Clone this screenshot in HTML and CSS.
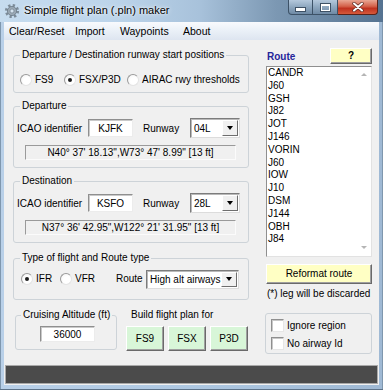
FILE: index.html
```html
<!DOCTYPE html>
<html>
<head>
<meta charset="utf-8">
<title>Simple flight plan (.pln) maker</title>
<link rel="stylesheet" href="styles.css">
</head>
<body>
<div class="window">
  <div class="titlebar">
    <svg class="app-icon" width="16" height="16" viewBox="0 0 16 16">
      <circle cx="8" cy="8" r="5.6" fill="none" stroke="#7d8c99" stroke-width="3" stroke-dasharray="2.2 2.2"/>
      <circle cx="8" cy="8" r="4.6" fill="#9aa8b4" stroke="#6c7b88" stroke-width="0.8"/>
      <circle cx="8" cy="8" r="2" fill="#d4e2ee" stroke="#6c7b88" stroke-width="0.6"/>
    </svg>
    <span class="title">Simple flight plan (.pln) maker</span>
    <div class="caption">
      <span class="cbtn cmin"><i class="glyph-min"></i></span>
      <span class="cbtn cmax"><i class="glyph-max"></i></span>
      <span class="cbtn cclose">
        <svg width="12" height="10" viewBox="0 0 12 10"><path d="M2 1.5 L10 8.5 M10 1.5 L2 8.5" stroke="#5a2a22" stroke-width="3.4" stroke-linecap="round"/><path d="M2 1.5 L10 8.5 M10 1.5 L2 8.5" stroke="#fff" stroke-width="2" stroke-linecap="round"/></svg>
      </span>
    </div>
  </div>
  <div class="menubar">
    <span class="menu m1">Clear/Reset</span>
    <span class="menu m2">Import</span>
    <span class="menu m3">Waypoints</span>
    <span class="menu m4">About</span>
  </div>
  <div class="client">
    <div class="main">
      <div class="left">
        <div class="group g-pos">
          <span class="group-title">Departure / Destination runway start positions</span>
          <label class="opt o-fs9"><span class="radio"></span>FS9</label>
          <label class="opt o-fsx"><span class="radio checked"></span>FSX/P3D</label>
          <label class="opt o-airac"><span class="radio"></span>AIRAC rwy thresholds</label>
        </div>

        <div class="group g-apt">
          <span class="group-title">Departure</span>
          <div class="apt-row">
            <span class="lbl-icao">ICAO identifier</span>
            <span class="tb tb-icao">KJFK</span>
            <span class="lbl-rwy">Runway</span>
            <span class="combo combo-rwy"><span class="combo-text">04L</span><span class="combo-btn"><i class="arrow"></i></span></span>
          </div>
          <div class="coords">N40° 37' 18.13",W73° 47' 8.99" [13 ft]</div>
        </div>

        <div class="group g-apt g-dest">
          <span class="group-title">Destination</span>
          <div class="apt-row">
            <span class="lbl-icao">ICAO identifier</span>
            <span class="tb tb-icao">KSFO</span>
            <span class="lbl-rwy">Runway</span>
            <span class="combo combo-rwy"><span class="combo-text">28L</span><span class="combo-btn"><i class="arrow"></i></span></span>
          </div>
          <div class="coords">N37° 36' 42.95",W122° 21' 31.95" [13 ft]</div>
        </div>

        <div class="group g-type">
          <span class="group-title">Type of flight and Route type</span>
          <label class="opt o-ifr"><span class="radio checked"></span>IFR</label>
          <label class="opt o-vfr"><span class="radio"></span>VFR</label>
          <span class="lbl-route">Route</span>
          <span class="combo combo-route"><span class="combo-text">High alt airways</span><span class="combo-btn"><i class="arrow"></i></span></span>
        </div>

        <div class="bottom-row">
          <div class="group g-alt">
            <span class="group-title">Cruising Altitude (ft)</span>
            <span class="tb tb-alt">36000</span>
          </div>
          <div class="build">
            <div class="build-lbl">Build flight plan for</div>
            <div class="build-btns">
              <span class="btn btn-green">FS9</span>
              <span class="btn btn-green">FSX</span>
              <span class="btn btn-green">P3D</span>
            </div>
          </div>
        </div>
      </div>

      <div class="right">
        <div class="route-head">
          <span class="route-lbl">Route</span>
          <span class="btn btn-yellow btn-help">?</span>
        </div>
        <div class="listbox">
          <div class="items">
            <div>CANDR</div>
            <div>J60</div>
            <div>GSH</div>
            <div>J82</div>
            <div>JOT</div>
            <div>J146</div>
            <div>VORIN</div>
            <div>J60</div>
            <div>IOW</div>
            <div>J10</div>
            <div>DSM</div>
            <div>J144</div>
            <div>OBH</div>
            <div>J84</div>
          </div>
          <div class="vscroll"><i class="sarrow up"></i><i class="sarrow down"></i></div>
        </div>
        <span class="btn btn-yellow btn-reformat">Reformat route</span>
        <div class="note">(*) leg will be discarded</div>
        <div class="group g-checks">
          <label class="chk-row"><span class="chk"></span>Ignore region</label>
          <label class="chk-row"><span class="chk"></span>No airway Id</label>
        </div>
      </div>
    </div>
    <div class="status"></div>
  </div>
</div>
</body>
</html>
```

FILE: styles.css
```css
* { box-sizing: border-box; margin: 0; padding: 0; }
html, body { margin: 0; padding: 0; }
body {
  width: 383px;
  height: 390px;
  overflow: hidden;
  font-family: "Liberation Sans", Arial, sans-serif;
  font-size: 10px;
  color: #000;
  background: #b6cde4;
}

.window {
  width: 383px;
  height: 390px;
  display: flex;
  flex-direction: column;
  padding-bottom: 5px;
  background: linear-gradient(90deg, #b9d0e8 0%, #aec8e2 50%, #9fb9d4 100%);
  box-shadow: inset 0 -1px 0 #5d7288, inset 1px 0 0 #7f97ae, inset -1px 0 0 #7f97ae;
}

/* ---------- title bar ---------- */
.titlebar {
  height: 22px;
  display: flex;
  align-items: flex-start;
  background: linear-gradient(90deg, #c6dcef 0%, #bcd4ea 30%, #a8c2db 52%, #7c98b3 72%, #557391 100%);
}
.app-icon { margin: 3px 0 0 4px; flex: none; }
.title {
  margin: 4px 0 0 4px;
  font-size: 11px;
  line-height: 13px;
  color: #000;
  text-shadow: 0 0 5px rgba(255,255,255,0.9), 0 0 2px rgba(255,255,255,0.8);
}
.caption {
  margin-left: auto;
  margin-right: 5px;
  display: flex;
  height: 15px;
}
.cbtn {
  height: 15px;
  display: flex;
  align-items: center;
  justify-content: center;
  border: 1px solid #3d5267;
  border-top: none;
}
.cmin {
  width: 25px;
  border-bottom-left-radius: 4px;
  background: linear-gradient(180deg, #b4c8dc 0%, #8ea7bf 50%, #6f8aa5 100%);
}
.cmax {
  width: 25px;
  border-left: none;
  background: linear-gradient(180deg, #b4c8dc 0%, #8ea7bf 50%, #6f8aa5 100%);
}
.cclose {
  width: 40px;
  border-left: none;
  border-bottom-right-radius: 4px;
  background: linear-gradient(180deg, #e9a794 0%, #d4614a 45%, #c0321f 60%, #d65a3c 100%);
  border-color: #5b2218;
}
.glyph-min {
  display: block;
  width: 9px;
  height: 3px;
  margin-top: 5px;
  background: #fff;
  box-shadow: 0 0 0 1px #3e5165;
}
.glyph-max {
  display: block;
  width: 9px;
  height: 7px;
  border: 1px solid #fff;
  border-top-width: 2px;
  box-shadow: 0 0 0 1px #3e5165;
}

/* ---------- menu bar ---------- */
.menubar {
  height: 18px;
  margin: 0 4px;
  display: flex;
  align-items: center;
  padding-left: 5px;
  background: linear-gradient(180deg, #f8fafd 0%, #eaf0f7 50%, #dde5f0 100%);
  font-size: 10.5px;
  line-height: 18px;
}
.menu { flex: none; }
.m1 { width: 66px; }
.m2 { width: 45px; }
.m3 { width: 63px; }

/* ---------- client ---------- */
.client {
  flex: 1;
  margin: 0 4px;
  background: #f0f0f0;
  display: flex;
  flex-direction: column;
}
.main {
  flex: 1;
  display: flex;
}
.left {
  width: 236px;
  margin-left: 9px;
  padding-top: 15px;
  display: flex;
  flex-direction: column;
}
.right {
  width: 107px;
  margin-left: 16px;
  padding-top: 8px;
  display: flex;
  flex-direction: column;
}
.status {
  height: 19px;
  margin: 0 1px 1px;
  background: #4b4b4b;
  border: 1px solid #a9a9a9;
}

/* ---------- group boxes ---------- */
.group {
  position: relative;
  border: 1px solid #cdd3d8;
  border-radius: 3px;
}
.group-title {
  position: absolute;
  top: -7px;
  left: 6px;
  padding: 0 2px;
  line-height: 12px;
  background: #f0f0f0;
  white-space: nowrap;
}

.g-pos {
  height: 38px;
  display: flex;
  align-items: center;
  padding: 11px 0 0 6px;
}
.opt {
  display: flex;
  align-items: center;
  flex: none;
  line-height: 12px;
}
.opt .radio { margin-right: 3px; }
.o-fs9 { width: 44px; }
.o-fsx { width: 63px; }

.radio {
  display: inline-flex;
  align-items: center;
  justify-content: center;
  width: 12px;
  height: 12px;
  border-radius: 50%;
  border: 1px solid;
  border-color: #9a9a9a #e4e4e4 #e4e4e4 #9a9a9a;
  background: radial-gradient(circle at 60% 60%, #fff 40%, #f0f0f0 100%);
  flex: none;
}
.radio.checked::after {
  content: "";
  width: 4px;
  height: 4px;
  border-radius: 50%;
  background: #1e1e1e;
}

.g-apt {
  margin-top: 13px;
  padding: 11px 0 7px 3px;
}
.g-dest { margin-top: 13px; }
.apt-row {
  display: flex;
  align-items: center;
  height: 20px;
}
.lbl-icao { width: 71px; flex: none; }
.lbl-rwy { width: 47px; margin-left: 10px; flex: none; }

.tb {
  display: flex;
  align-items: center;
  justify-content: center;
  background: #fff;
  border: 1px solid;
  border-color: #8f8f8f #ececec #ececec #8f8f8f;
  box-shadow: inset 1px 1px 0 #c9c9c9;
}
.tb-icao { width: 45px; height: 18px; flex: none; }

.combo {
  display: flex;
  align-items: stretch;
  height: 20px;
  background: #fff;
  border: 1px solid;
  border-color: #7c7c7c #dcdcdc #dcdcdc #7c7c7c;
  box-shadow: inset 1px 1px 0 #b9b9b9;
  flex: none;
}
.combo-rwy { width: 50px; }
.combo-text {
  flex: 1;
  padding-left: 3px;
  display: flex;
  align-items: center;
  white-space: nowrap;
  overflow: hidden;
}
.combo-btn {
  width: 16px;
  margin: 1px 1px 1px 0;
  background: #f0f0f0;
  border: 1px solid;
  border-color: #ffffff #6e6e6e #6e6e6e #ffffff;
  display: flex;
  align-items: center;
  justify-content: center;
}
.arrow {
  width: 0;
  height: 0;
  border-left: 3.5px solid transparent;
  border-right: 3.5px solid transparent;
  border-top: 4px solid #000;
}

.coords {
  width: 211px;
  height: 15px;
  margin: 7px 0 0 8px;
  border: 1px solid;
  border-color: #9a9a9a #fbfbfb #fbfbfb #9a9a9a;
  text-align: center;
  line-height: 13px;
  white-space: nowrap;
}

.g-type {
  margin-top: 15px;
  height: 42px;
  display: flex;
  align-items: center;
  padding: 0 0 0 7px;
}
.o-ifr { width: 39px; }
.o-vfr { width: 56px; }
.lbl-route { width: 30px; flex: none; line-height: 12px; }
.combo-route { width: 93px; height: 19px; }

.bottom-row {
  display: flex;
  margin-top: 9px;
}
.g-alt {
  width: 102px;
  height: 35px;
  margin: 6px 0 0 2px;
  padding: 10px 0 0 24px;
}
.g-alt .group-title { left: 5px; }
.tb-alt { width: 55px; height: 16px; }

.build {
  margin-left: 9px;
  display: flex;
  flex-direction: column;
}
.build-lbl {
  line-height: 12px;
  padding-left: 5px;
}
.build-btns {
  display: flex;
  gap: 4px;
  margin-top: 5px;
}

.btn {
  display: flex;
  align-items: center;
  justify-content: center;
  border: 1px solid;
  border-color: #ffffff #6a6a6a #6a6a6a #ffffff;
  box-shadow: inset -1px -1px 0 #a0a0a0, 0 0 0 0 transparent;
  line-height: 12px;
}
.btn-green {
  width: 38px;
  height: 25px;
  background: #d8f6d8;
}
.btn-yellow { background: #ffffc4; }

/* ---------- right column ---------- */
.route-head {
  display: flex;
  align-items: center;
  height: 16px;
  margin-bottom: 2px;
}
.route-lbl {
  font-weight: bold;
  color: #25259a;
  padding-left: 2px;
}
.btn-help {
  width: 42px;
  height: 16px;
  margin-left: auto;
  font-weight: bold;
}
.listbox {
  margin-left: 1px;
  width: 106px;
  height: 191px;
  display: flex;
  background: #fff;
  border: 1px solid;
  border-color: #8f8f8f #e2e2e2 #e2e2e2 #8f8f8f;
}
.items {
  flex: 1;
  padding-left: 1px;
  line-height: 12.8px;
}
.vscroll {
  width: 15px;
  display: flex;
  flex-direction: column;
  justify-content: space-between;
  align-items: center;
  padding: 6px 0 7px;
}
.sarrow {
  width: 0;
  height: 0;
  border-left: 3px solid transparent;
  border-right: 3px solid transparent;
}
.sarrow.up { border-bottom: 3px solid #b5b5b5; }
.sarrow.down { border-top: 3px solid #b5b5b5; }

.btn-reformat {
  margin: 7px 0 0 1px;
  width: 106px;
  height: 20px;
}
.note {
  margin-top: 4px;
  padding-left: 2px;
  line-height: 12px;
  white-space: nowrap;
}
.g-checks {
  margin-top: 13px;
  height: 41px;
  padding: 4px 0 0 5px;
  display: flex;
  flex-direction: column;
  gap: 4px;
}
.chk-row {
  display: flex;
  align-items: center;
  height: 14px;
}
.chk {
  width: 13px;
  height: 13px;
  margin-right: 3px;
  background: #fff;
  border: 1px solid;
  border-color: #8f8f8f #e6e6e6 #e6e6e6 #8f8f8f;
  box-shadow: inset 1px 1px 0 #c8c8c8;
  flex: none;
}
```
